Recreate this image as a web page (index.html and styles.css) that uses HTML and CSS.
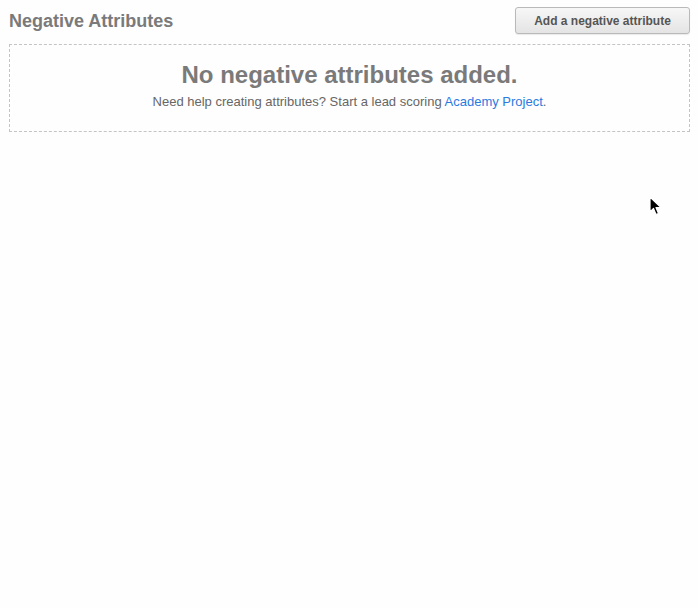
FILE: index.html
```html
<!DOCTYPE html>
<html>
<head>
<meta charset="utf-8">
<link rel="stylesheet" href="styles.css">
</head>
<body>
<div class="page">
  <div class="header">
    <h2 class="title">Negative Attributes</h2>
    <button class="btn">Add a negative attribute</button>
  </div>
  <div class="empty">
    <h3 class="empty-title">No negative attributes added.</h3>
    <p class="empty-text">Need help creating attributes? Start a lead scoring <a href="#" class="link">Academy Project</a>.</p>
  </div>
</div>
<svg class="cursor" width="14" height="22" viewBox="0 0 14 22">
  <path d="M1 1 L1 16 L4.5 12.5 L7 18.5 L9.5 17.5 L7 11.5 L12 11.5 Z" fill="#000" stroke="#fff" stroke-width="1.2" stroke-linejoin="round"/>
</svg>
</body>
</html>
```
FILE: styles.css
```css
html, body {
  margin: 0;
  padding: 0;
  background: #fefefe;
}
body {
  font-family: "Liberation Sans", Arial, sans-serif;
  color: #777;
  position: relative;
  min-height: 608px;
}
.page {
  padding: 7px 8px 0 9px;
}
.header {
  display: flex;
  justify-content: space-between;
  align-items: flex-start;
  height: 37px;
}
.title {
  margin: 0;
  padding-top: 3px;
  font-size: 18px;
  line-height: 22px;
  font-weight: bold;
  color: #7a7a7a;
}
.btn {
  width: 175px;
  height: 27px;
  border: 1px solid #b9b9b9;
  border-radius: 3px;
  background: linear-gradient(#f7f7f7, #e4e4e4);
  font-family: "Liberation Sans", Arial, sans-serif;
  font-size: 12px;
  font-weight: bold;
  color: #555;
  padding: 0;
  box-shadow: 0 1px 1px rgba(0,0,0,0.08);
}
.empty {
  border: 1px dashed #c4c4c4;
  height: 88px;
  text-align: center;
  box-sizing: border-box;
  padding-top: 16px;
}
.empty-title {
  margin: 0;
  font-size: 24px;
  line-height: 28px;
  font-weight: bold;
  color: #7a7a7a;
}
.empty-text {
  margin: 5px 0 0;
  font-size: 13px;
  line-height: 16px;
  color: #666;
}
.link {
  color: #2a7ae2;
  text-decoration: none;
}
.cursor {
  position: absolute;
  left: 649px;
  top: 196px;
}
```
